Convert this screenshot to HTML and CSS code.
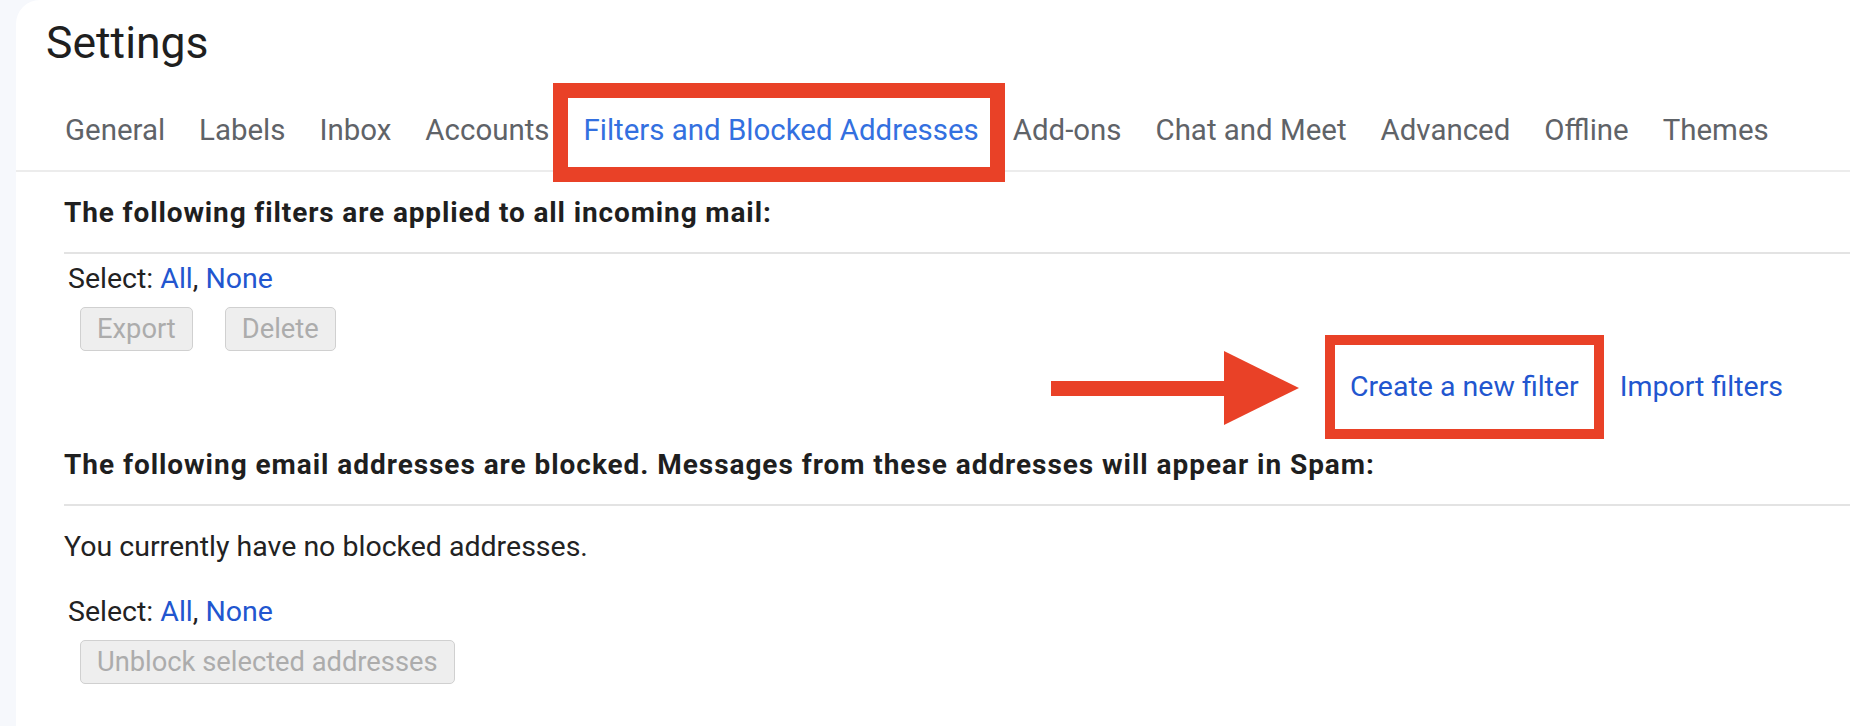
FILE: index.html
```html
<!DOCTYPE html>
<html lang="en">
<head>
<meta charset="utf-8">
<title>Settings</title>
<link rel="stylesheet" href="styles.css">
</head>
<body>
<main class="panel">
  <h1 class="title">Settings</h1>
  <nav class="tabs">
    <a class="tab">General</a>
    <a class="tab">Labels</a>
    <a class="tab">Inbox</a>
    <a class="tab">Accounts</a>
    <a class="tab active">Filters and Blocked Addresses<span class="mark-box"></span></a>
    <a class="tab">Add-ons</a>
    <a class="tab">Chat and Meet</a>
    <a class="tab">Advanced</a>
    <a class="tab">Offline</a>
    <a class="tab">Themes</a>
  </nav>
  <section class="content">
    <h2 class="section-head">The following filters are applied to all incoming mail:</h2>
    <div class="select">Select: <a class="link">All</a>, <a class="link">None</a></div>
    <div class="btns">
      <button class="btn" disabled>Export</button>
      <button class="btn" disabled>Delete</button>
    </div>
    <div class="filter-links">
      <a class="link create">Create a new filter<span class="mark-box small"></span><svg class="arrow" viewBox="0 0 248 74" width="248" height="74"><rect x="0" y="30" width="175" height="15" fill="#e94127"/><polygon points="173,0 173,74 248,37" fill="#e94127"/></svg></a>
      <a class="link">Import filters</a>
    </div>
    <h2 class="section-head second">The following email addresses are blocked. Messages from these addresses will appear in Spam:</h2>
    <p class="empty">You currently have no blocked addresses.</p>
    <div class="select second">Select: <a class="link">All</a>, <a class="link">None</a></div>
    <div class="btns">
      <button class="btn" disabled>Unblock selected addresses</button>
    </div>
  </section>
</main>
</body>
</html>
```

FILE: styles.css
```css
* { box-sizing: border-box; }
html, body {
  margin: 0;
  padding: 0;
  height: 100%;
}
body {
  background: #f6f8fc;
  font-family: Roboto, "Liberation Sans", Arial, sans-serif;
  color: #222;
  overflow: hidden;
}
.panel {
  margin-left: 16px;
  min-height: 100%;
  background: #fff;
  border-top-left-radius: 24px;
}
.title {
  margin: 0;
  padding: 17px 0 0 30px;
  font-size: 44.5px;
  line-height: 52px;
  font-weight: 400;
  color: #1f1f1f;
}
.tabs {
  display: flex;
  padding-left: 32px;
  border-bottom: 2px solid #ececec;
}
.tab {
  position: relative;
  padding: 44px 17px 19px;
  font-size: 29.45px;
  line-height: 35px;
  color: #5f6368;
  border-bottom: 3px solid transparent;
  white-space: nowrap;
}
.tab.active {
  color: #3370e0;
  border-bottom-color: #3a72e2;
}
.mark-box {
  position: absolute;
  left: -13px;
  right: -9px;
  top: 14px;
  bottom: -15px;
  border: 15px solid #e94127;
}
.content {
  padding-left: 48px;
}
.section-head {
  margin: 25px 0 0;
  padding-bottom: 23px;
  font-size: 28px;
  line-height: 32px;
  font-weight: 700;
  letter-spacing: 0.87px;
  color: #1f1f1f;
  border-bottom: 2px solid #e3e3e3;
  white-space: nowrap;
}
.section-head.second {
  margin-top: 45px;
  letter-spacing: 0.95px;
}
.select {
  margin-top: 8px;
  padding-left: 4px;
  font-size: 28.5px;
  line-height: 34px;
  color: #222;
}
.select.second {
  margin-top: 31px;
}
.link {
  color: #2256cf;
  text-decoration: none;
}
.btns {
  display: flex;
  gap: 32px;
  margin-top: 11px;
  padding-left: 16px;
}
.btn {
  height: 44px;
  padding: 0 16px;
  font-family: Roboto, "Liberation Sans", Arial, sans-serif;
  font-size: 27.3px;
  color: #acacac;
  background: #eeeeee;
  border: 1.5px solid #d0d0d0;
  border-radius: 5px;
}
.filter-links {
  display: flex;
  justify-content: flex-end;
  gap: 41px;
  margin-top: 19px;
  padding-right: 67px;
  font-size: 28.5px;
  line-height: 34px;
}
.create {
  position: relative;
}
.mark-box.small {
  left: -25px;
  right: -25px;
  top: -35px;
  bottom: -35px;
  border-width: 10px;
}
.arrow {
  position: absolute;
  left: -299px;
  top: -19px;
  display: block;
}
.empty {
  margin: 24px 0 0;
  font-size: 28.5px;
  line-height: 34px;
  color: #222;
}
```
